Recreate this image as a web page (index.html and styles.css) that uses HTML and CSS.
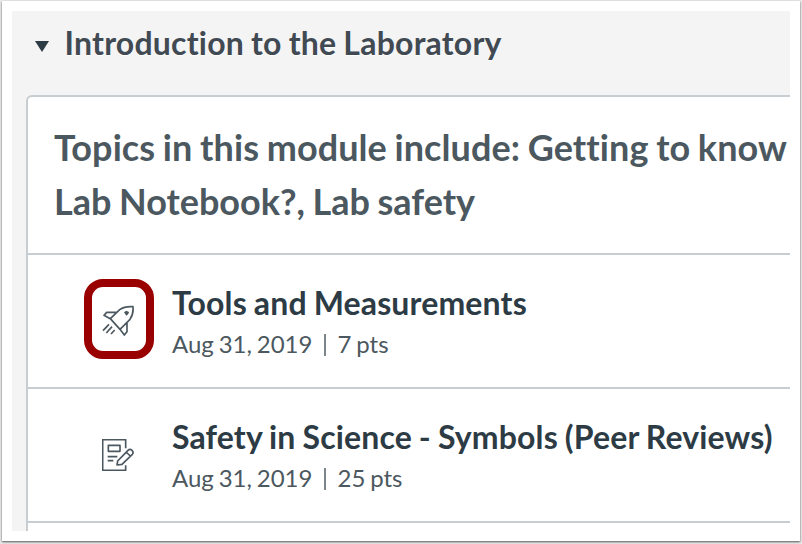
FILE: index.html
```
<!DOCTYPE html>
<html lang="en">
<head>
<meta charset="utf-8">
<title>Modules</title>
<link rel="stylesheet" href="styles.css">
</head>
<body>
<div class="frame">
  <main class="module">
    <header class="module-header">
      <svg class="caret" viewBox="0 0 14 11"><path d="M0 0H14L7 11Z"/></svg>
      <h1><span>Introduction to the Laboratory</span></h1>
    </header>
    <section class="card">
      <p class="topics"><span class="lead">Topics in this module include: Getting to know</span><br><span>Lab Notebook?, Lab safety</span></p>
      <article class="item">
        <div class="icon highlighted">
          <svg viewBox="78 105 96 96">
            <path d="M103 146L131 119Q146 108 171 110Q173 132 162 148L132 178ZM123 127H92L84 136L104 147M153 158V185L145 195L132 178M99 163L81 182M108 170L91 189M116 180L105 192"/>
            <path class="solid" d="M144 127L151 122L159 126L157 132L151 137Z"/>
          </svg>
        </div>
        <div class="text">
          <h2><span>Tools and Measurements</span></h2>
          <p class="meta"><span>Aug 31, 2019</span><i></i><span>7 pts</span></p>
        </div>
      </article>
      <article class="item">
        <div class="icon">
          <svg viewBox="36 42 96 96">
            <path d="M107 70V44H38V136H107V121M55 61H90V79H55ZM53 95H82M53 107H70M83 108L114 76Q120 70 126 76Q132 82 127 88L96 118L81 120ZM108 81L121 93"/>
          </svg>
        </div>
        <div class="text">
          <h2><span>Safety in Science - Symbols (Peer Reviews)</span></h2>
          <p class="meta"><span>Aug 31, 2019</span><i></i><span>25 pts</span></p>
        </div>
      </article>
    </section>
  </main>
</div>
</body>
</html>
```
FILE: styles.css
```
* { box-sizing: border-box; }
body {
  margin: 0;
  height: 544px;
  overflow: hidden;
  background: #e9e9e9;
  font-family: Lato, sans-serif;
  font-variant-ligatures: none;
  color: #2d3b45;
}
h1, h2, p { margin: 0; white-space: nowrap; }
.frame {
  width: 798px;
  height: 540px;
  margin: 1px 2px 0;
  padding: 10px;
  background: #fff;
  box-shadow: 0 1px 2px 0 #555;
}
.module {
  display: flex;
  flex-direction: column;
  height: 520px;
  padding-left: 14px;
  background: #f4f4f4;
  overflow: hidden;
}
.module-header {
  display: flex;
  align-items: center;
  gap: 15.5px;
  height: 84px;
  padding: 0 0 20px 9px;
}
.caret { width: 14px; height: 11px; margin-top: 6px; fill: #2d3b45; }
h1, h2 { font-size: 32px; line-height: 40px; font-weight: 700; word-spacing: -1px; letter-spacing: 0.15px; }
h1 { color: #414a53; letter-spacing: 0.22px; text-shadow: 0 1px #fff; }
.card {
  flex: 1;
  border: solid #c7cdd1;
  border-width: 2px 0 0 2px;
  border-top-left-radius: 6px;
  background: #fff;
}
.topics {
  height: 158px;
  padding: 23px 0 0 26px;
  border-bottom: 2px solid #c7cdd1;
  font-size: 36px;
  line-height: 54px;
  font-weight: 700;
  word-spacing: -1.2px;
  color: #4c5860;
}
.lead { letter-spacing: 0.08px; }
.item {
  display: flex;
  height: 134px;
  padding-left: 56px;
  border-bottom: 2px solid #c7cdd1;
}
.icon {
  display: flex;
  align-items: center;
  justify-content: center;
  width: 70px;
  height: 80px;
  margin: 24px 18px 0 0;
  border: 8px solid transparent;
  border-radius: 19px;
}
.icon svg {
  width: 32px;
  height: 32px;
  margin: 4px 2px 0 0;
  fill: none;
  stroke: #4c5860;
  stroke-width: 5;
  stroke-linejoin: round;
}
.icon .solid { fill: #4c5860; stroke: none; }
.highlighted { border-color: #900; }
.text { padding-top: 28px; }
.meta {
  display: flex;
  align-items: center;
  height: 42px;
  font-size: 24px;
  line-height: 40px;
  word-spacing: -1.3px;
  color: #4c5860;
}
.meta i { width: 2px; height: 22px; margin: 2px 11px 0 12px; background: #7b858a; }
```
